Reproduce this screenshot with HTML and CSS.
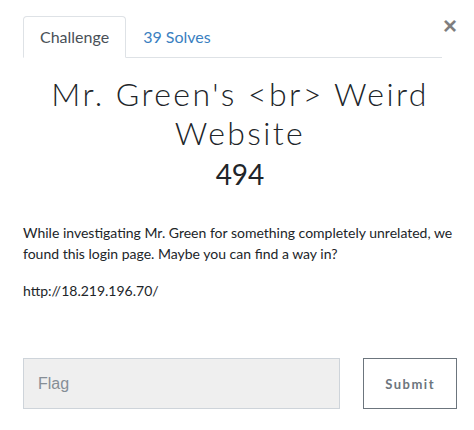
FILE: index.html
```html
<!DOCTYPE html>
<html>
<head>
<meta charset="utf-8">
<link rel="stylesheet" href="styles.css">
</head>
<body>
<div class="modal">
  <button class="close" type="button">×</button>
  <ul class="tabs">
    <li class="tab active">Challenge</li>
    <li class="tab link">39 Solves</li>
  </ul>
  <h2 class="title">Mr. Green's &lt;br&gt; Weird Website</h2>
  <h3 class="value">494</h3>
  <div class="desc">
    <p>While investigating Mr. Green for something completely unrelated, we found this login page. Maybe you can find a way in?</p>
    <p>http://18.219.196.70/</p>
  </div>
  <form class="submit-row">
    <input class="flag" type="text" placeholder="Flag">
    <button class="submit" type="button">Submit</button>
  </form>
</div>
</body>
</html>
```

FILE: styles.css
```css
* { box-sizing: border-box; }
html, body { margin: 0; padding: 0; background: #fff; }
body { font-family: Lato, "Liberation Sans", sans-serif; color: #212529; }
.modal {
  position: relative;
  width: 474px;
  height: 430px;
  padding: 16px 17px 0 23px;
}
.close {
  position: absolute;
  top: 14px;
  right: 17px;
  border: 0;
  background: none;
  padding: 0;
  font-family: "Liberation Sans", Arial, sans-serif;
  font-size: 24px;
  font-weight: 700;
  line-height: 1;
  color: #000;
  opacity: .5;
}
.tabs {
  list-style: none;
  margin: 0 15px 0 0;
  padding: 0;
  display: flex;
  border-bottom: 1px solid #dee2e6;
}
.tab {
  font-size: 16px;
  line-height: 24px;
  padding: 8px 16px;
  margin-bottom: -1px;
  border: 1px solid transparent;
  border-radius: 4px 4px 0 0;
}
.tab.active {
  color: #495057;
  border-color: #dee2e6 #dee2e6 #fff;
  background: #fff;
}
.tab.link { color: #3a7fc1; }
.title {
  margin: 16px 0 0;
  text-align: center;
  font-family: Lato, sans-serif;
  font-weight: 300;
  font-size: 32px;
  line-height: 39px;
  letter-spacing: 2.4px;
}
.value {
  margin: 5px 0 0;
  text-align: center;
  font-weight: 400;
  font-size: 28px;
  line-height: 34px;
}
.desc {
  margin-top: 31px;
  font-size: 14px;
  line-height: 21px;
}
.desc p { margin: 0 0 16px; }
.submit-row {
  display: flex;
  gap: 23px;
  margin-top: 57px;
}
.flag {
  width: 318px;
  height: 51px;
  padding: 0 14px;
  border: 1px solid #ced4da;
  background: #efefef;
  font-family: "Liberation Sans", Arial, sans-serif;
  font-size: 16px;
}
.flag::placeholder { color: #868e96; }
.submit {
  width: 94px;
  height: 51px;
  border: 1px solid #6c757d;
  background: #fff;
  color: #6c757d;
  font-family: Lato, sans-serif;
  font-weight: 700;
  font-size: 13px;
  letter-spacing: 1.5px;
}
```
